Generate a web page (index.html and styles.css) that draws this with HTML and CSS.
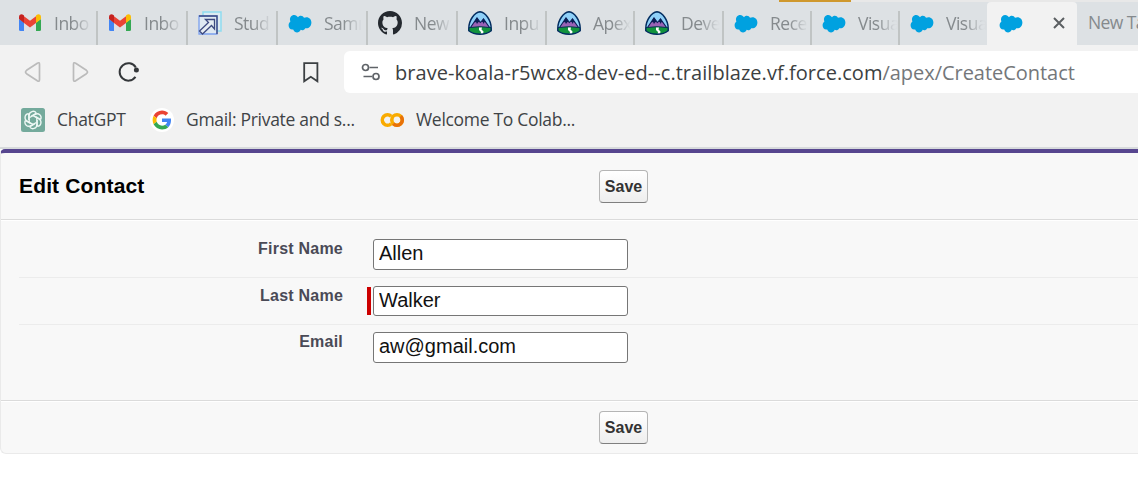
FILE: index.html
```
<!DOCTYPE html>
<html lang="en">
<head>
<meta charset="utf-8">
<title>Edit Contact</title>
<link rel="stylesheet" href="styles.css">
</head>
<body>
<svg class="defs" aria-hidden="true">
  <defs>
    <symbol id="gmail" viewBox="0 0 24 24">
      <path fill="#4285f4" d="M1 8v10.500Q1 20 2.500 20H6v-8.600z"/>
      <path fill="#34a853" d="M18 11.400V20h3.500q1.500 0 1.500-1.500V8z"/>
      <path fill="#ea4335" d="M6 5.200l6 4.600 6-4.600v6.700l-6 4.500-6-4.500z"/>
      <path fill="#c5221f" d="M1 8V6c0-2.600 2.500-3.500 4.400-2.100l.6.500v7.500z"/>
      <path fill="#fbbc04" d="M18 11.900V4.400l.6-.5C20.500 2.500 23 3.400 23 6v2z"/>
    </symbol>
    <symbol id="studio" viewBox="0 0 24 24">
      <path fill="#dcebf2" stroke="#8fdcf0" stroke-width="1.500" d="M5 1h18v19H5z"/>
      <path fill="#dfe9f2" stroke="#7ba0ee" stroke-width="1.300" d="M1 5h18v18H1z"/>
      <path fill="none" stroke="#3d4a80" stroke-width="1.400" d="M1 5h18v18"/>
      <path fill="#e6edf3" stroke="#3d4a80" stroke-width="1.300" d="M7.500 8.500h9v9.500l-3-3.500L4.500 23 1.500 20l9-8.500z"/>
    </symbol>
    <symbol id="cloud" viewBox="0 0 24 24">
      <path fill="#00a1e0" transform="translate(0 .6) scale(1 1.090)" d="M10 5.200C12 3 15 3.600 16 5.700c3.900-1.700 7.400.8 7.400 4.300 0 3.800-3.300 6-6.200 5.200-1 1.900-3 2.200-4.500 1.500-1.600 3.400-6.200 3.100-7.500-.3C2.300 17 .500 14.700.600 12.500c0-1.700.9-2.700 1.800-3.400C.900 5.400 3.600 3.100 6.200 3.100c1.700 0 3 .9 3.800 2.100z"/>
    </symbol>
    <symbol id="github" viewBox="0 0 16 16">
      <path fill="#24292f" d="M8 0C3.580 0 0 3.580 0 8c0 3.540 2.290 6.530 5.470 7.590.4.070.55-.17.55-.38 0-.19-.01-.82-.01-1.490-2.010.37-2.530-.49-2.690-.94-.09-.23-.48-.94-.82-1.130-.28-.15-.68-.52-.01-.53.63-.01 1.080.58 1.230.82.72 1.210 1.870.87 2.330.66.07-.52.28-.87.51-1.070-1.780-.2-3.640-.89-3.640-3.950 0-.87.31-1.590.82-2.150-.08-.2-.36-1.020.08-2.120 0 0 .67-.21 2.200.82.64-.18 1.320-.27 2-.27s1.360.09 2 .27c1.530-1.040 2.200-.82 2.200-.82.44 1.100.16 1.920.08 2.120.51.56.82 1.270.82 2.150 0 3.070-1.870 3.750-3.650 3.950.29.25.54.73.54 1.480 0 1.070-.01 1.930-.01 2.200 0 .21.15.46.55.38A8.010 8.010 0 0 0 16 8c0-4.420-3.580-8-8-8z"/>
    </symbol>
    <symbol id="trail" viewBox="0 0 24 24">
      <clipPath id="badge"><path d="M12 .8C17.500 1.600 23.200 9 23.200 17.500v2.200C20.500 22 17 23.200 12 23.200S3.500 22 .8 19.700v-2.200C.8 9 6.500 1.600 12 .8z"/></clipPath>
      <g clip-path="url(#badge)">
        <path fill="#8fd0f8" d="M0 0h24v24H0z"/>
        <path fill="#9a62b5" stroke="#0b1f56" stroke-width="1.100" d="M2.500 16.500L9 7l3.500 4.500L15.500 8l6 8.500z"/>
        <path fill="#0b1f56" d="M6 11.500l3-5 3 5-1.600-.5-1.400 2-1-2zM13.500 11l2-3.500 2.700 4-1.700-.5-.8 2-1-2z"/>
        <path fill="#12933d" stroke="#0b3657" d="M0 16.700q12-2 24 0v8H0z"/>
        <path fill="#fff" d="M11 16.500h3l-.5 2 2 2-.5 3h-2.500l.5-2.500-2-2z"/>
      </g>
      <path fill="none" stroke="#032d60" stroke-width="1.500" d="M12 .8C17.500 1.600 23.200 9 23.200 17.500v2.200C20.500 22 17 23.200 12 23.200S3.500 22 .8 19.700v-2.200C.8 9 6.500 1.600 12 .8z"/>
    </symbol>
  </defs>
</svg>

<header class="browser">
  <div class="tabs">
    <div class="tab"><svg class="ico"><use href="#gmail"/></svg><span class="name">Inbo</span></div>
    <div class="tab"><svg class="ico"><use href="#gmail"/></svg><span class="name">Inbo</span></div>
    <div class="tab"><svg class="ico"><use href="#studio"/></svg><span class="name">Stud</span></div>
    <div class="tab"><svg class="ico"><use href="#cloud"/></svg><span class="name">Samı</span></div>
    <div class="tab"><svg class="ico"><use href="#github"/></svg><span class="name">New</span></div>
    <div class="tab mid"><svg class="ico"><use href="#trail"/></svg><span class="name">Inpu</span></div>
    <div class="tab narrow"><svg class="ico"><use href="#trail"/></svg><span class="name">Apex</span></div>
    <div class="tab mid"><svg class="ico"><use href="#trail"/></svg><span class="name">Deve</span></div>
    <div class="tab narrow"><svg class="ico"><use href="#cloud"/></svg><span class="name">Rece</span></div>
    <div class="tab narrow marked"><svg class="ico"><use href="#cloud"/></svg><span class="name">Visua</span></div>
    <div class="tab narrow last"><svg class="ico"><use href="#cloud"/></svg><span class="name">Visua</span></div>
    <div class="tab active"><svg class="ico"><use href="#cloud"/></svg>
      <svg class="close" viewBox="0 0 12 12"><path d="M1 1l10 10M11 1L1 11"/></svg></div>
    <div class="tab fresh">New Ta</div>
  </div>

  <div class="toolbar">
    <svg class="nav" viewBox="0 0 20 22"><path d="M2.600 9.300L13.300 2.200q2.200-1.200 2.200 1v15.600q0 2.200-2.200 1L2.600 12.700q-2.200-1.700 0-3.400z"/></svg>
    <svg class="nav forward" viewBox="0 0 20 22"><path d="M15.400 9.300L4.700 2.200q-2.200-1.200-2.200 1v15.600q0 2.200 2.200 1l10.700-7.100q2.200-1.700 0-3.400z"/></svg>
    <svg class="reload" viewBox="0 0 22 20"><path d="M17.500 14.900A8.700 8.700 0 1 1 17.800 5.400"/><circle cx="18.400" cy="8" r="2.500"/></svg>
    <svg class="mark" viewBox="0 0 16 21"><path d="M1.200 1.200h13.200v18L7.800 14.800l-6.600 4.400z"/></svg>
    <div class="address">
      <svg class="tune" viewBox="0 0 20 18"><circle cx="4.500" cy="4.500" r="3"/><path d="M8.500 4.500H17M2.500 13.500H11"/><circle cx="15" cy="13.500" r="3"/></svg>
      <span class="url">brave-koala-r5wcx8-dev-ed--c.trailblaze.vf.force.com<span class="path">/apex/CreateContact</span></span>
    </div>
  </div>

  <nav class="bookmarks">
    <span class="bookmark gpt"><svg class="ico" viewBox="0 0 24 24"><rect width="24" height="24" rx="2.500" fill="#74aa9c"/>
      <g fill="none" stroke="#eef8f5" stroke-width="1.300">
        <path id="petal" d="M8.200 14.200V7.300a3.900 3.900 0 0 1 7.100-2.300M10 8.300l5.500-3.200"/>
        <use href="#petal" transform="rotate(60 12 12)"/><use href="#petal" transform="rotate(120 12 12)"/><use href="#petal" transform="rotate(180 12 12)"/><use href="#petal" transform="rotate(240 12 12)"/><use href="#petal" transform="rotate(300 12 12)"/>
      </g></svg><span class="label">ChatGPT</span></span>
    <span class="bookmark google"><svg class="ico" viewBox="0 0 24 24"><circle cx="12" cy="12" r="12" fill="#fff"/>
      <g transform="translate(2.600 2.600) scale(.392)">
        <path fill="#ea4335" d="M24 9.500c3.540 0 6.710 1.220 9.210 3.600l6.850-6.850C35.900 2.380 30.470 0 24 0 14.620 0 6.510 5.380 2.560 13.220l7.980 6.190C12.430 13.720 17.740 9.500 24 9.500z"/>
        <path fill="#4285f4" d="M46.980 24.550c0-1.570-.15-3.090-.38-4.550H24v9.020h12.940c-.58 2.960-2.260 5.480-4.780 7.180l7.730 6c4.510-4.180 7.090-10.360 7.090-17.650z"/>
        <path fill="#fbbc05" d="M10.530 28.590c-.48-1.450-.76-2.990-.76-4.590s.27-3.140.76-4.590l-7.980-6.190C.92 16.460 0 20.120 0 24s.92 7.540 2.560 10.780l7.970-6.190z"/>
        <path fill="#34a853" d="M24 48c6.480 0 11.930-2.130 15.890-5.810l-7.730-6c-2.150 1.450-4.920 2.300-8.160 2.300-6.260 0-11.570-4.220-13.470-9.910l-7.980 6.190C6.510 42.620 14.620 48 24 48z"/>
      </g></svg><span class="label">Gmail: Private and s...</span></span>
    <span class="bookmark colab"><svg class="ico" viewBox="0 0 24 24">
      <g fill="none" stroke-width="3.600"><path stroke="#f9ab00" d="M11.200 8.300A5.200 5.200 0 1 0 11.200 15.700"/><circle cx="17" cy="12" r="5.200" stroke="#f9ab00"/><path stroke="#e8710a" d="M20.700 8.300A5.200 5.200 0 0 1 13.300 15.700"/></g>
      </svg><span class="label">Welcome To Colab...</span></span>
  </nav>
</header>

<main class="block">
  <div class="block-header"><h2>Edit Contact</h2><button class="save">Save</button></div>
  <form class="fields">
    <div class="row"><label for="first">First Name</label><span class="required"></span><input id="first" value="Allen"></div>
    <div class="row second"><label for="last">Last Name</label><span class="required on"></span><input id="last" value="Walker"></div>
    <div class="row third"><label for="email">Email</label><span class="required"></span><input id="email" value="aw@gmail.com"></div>
  </form>
  <div class="block-footer"><button class="save">Save</button></div>
</main>
</body>
</html>
```
FILE: styles.css
```
* { box-sizing: border-box; }
body { margin: 0; height: 490px; overflow: hidden; background: #fff; font-family: "Liberation Sans", Arial, sans-serif; }
svg { display: block; flex: none; }
.defs { position: absolute; width: 0; height: 0; }

.browser { height: 149px; background: #f2f2f2; border-bottom: 2px solid #d7dadc; font-family: "Open Sans", "Noto Sans", sans-serif; overflow: hidden; }
.tabs { display: flex; height: 45px; padding-left: 7px; background: linear-gradient(90deg, transparent 851px, #e8e8e8 851px) 0 0 / 100% 2px no-repeat, #dde1e4; }
.tab { position: relative; display: flex; flex: none; align-items: center; width: 90px; padding-left: 11px; gap: 12px; color: #858a8d; font-size: 17.5px; }
.tab::after { content: ""; position: absolute; right: -1px; top: 11px; bottom: 0; width: 2px; background: #c0c4c4; }
.mid { width: 89px; }
.narrow { width: 88px; }
.last::after, .active::after, .fresh::after { display: none; }
.marked::before { content: ""; position: absolute; left: -32px; top: 0; width: 72px; height: 2px; background: #cf982d; }
.ico { width: 24px; height: 24px; }
.name { flex: none; white-space: nowrap; letter-spacing: -.5px; -webkit-mask-image: linear-gradient(90deg, #000 19px, rgba(0, 0, 0, .03) 37px); mask-image: linear-gradient(90deg, #000 19px, rgba(0, 0, 0, .03) 37px); }
.active { height: 43px; margin-top: 2px; padding: 0 12px 2px; background: #f2f2f2; border-radius: 4px 4px 0 0; justify-content: space-between; }
.close { width: 12px; height: 12px; fill: none; stroke: #5b5f62; stroke-width: 2; }
.fresh { width: 61px; padding-bottom: 1px; white-space: nowrap; letter-spacing: -.6px; }

.toolbar { display: flex; align-items: center; height: 53px; padding: 6px 0 5px 24px; }
.nav { width: 20px; height: 22px; fill: none; stroke: #bbb; stroke-width: 1.700; }
.forward { margin-left: 27px; }
.reload { width: 22px; height: 20px; margin-left: 27px; fill: none; stroke: #34373a; stroke-width: 2; }
.reload circle { fill: #34373a; stroke: none; }
.mark { width: 16px; height: 21px; margin-left: 163px; fill: none; stroke: #3c4043; stroke-width: 1.800; }
.address { display: flex; align-items: center; flex: 1; height: 42px; margin-left: 25px; padding-left: 17px; gap: 14px; background: #fff; border-radius: 6px 0 0 6px; }
.tune { width: 20px; height: 18px; fill: none; stroke: #5f6368; stroke-width: 1.700; }
.url { font-size: 20px; letter-spacing: .04px; white-space: nowrap; color: #3c3f42; }
.path { letter-spacing: -.04px; color: #74777a; }

.bookmarks { display: flex; height: 49px; padding: 0 0 5px 21px; }
.bookmark { display: flex; align-items: center; gap: 12px; font-size: 17.5px; letter-spacing: -.3px; color: #404346; white-space: nowrap; }
.label { padding-bottom: 3px; }
.gpt { width: 129px; }
.google { width: 230px; }

.block { height: 305px; background: #f8f8f8; border: 1px solid #eaeaea; border-width: 4px 0 1px 1px; border-top-color: #57468f; border-radius: 5px 0 0 6px; }
.block-header { display: flex; align-items: center; height: 67px; padding-left: 18px; border-bottom: 1px solid #dbdbdb; }
h2 { width: 580px; margin: 0; font-size: 21px; line-height: 24px; letter-spacing: .15px; color: #000; }
.save { width: 49px; height: 33px; padding: 1px 0 0; border: 1px solid #b5b5b5; border-bottom-color: #7f7f7f; border-radius: 4px; background: linear-gradient(#fff, #eee); font: bold 16px "Liberation Sans", Arial, sans-serif; color: #333; }
.fields { height: 180px; padding: 12px 0 0 18px; border-top: 1px solid #fff; }
.row { display: flex; align-items: flex-start; height: 45px; padding-top: 6px; border-bottom: 1px solid #ececec; }
.second { height: 47px; padding-top: 8px; }
.third { padding-top: 7px; border: 0; }
label { width: 324px; font-size: 16px; font-weight: bold; line-height: 19px; letter-spacing: .22px; text-align: right; color: #4a4a56; }
.required { width: 4px; height: 28px; margin: 1px 2px 0 24px; }
.on { background: #c00; }
input { width: 255px; height: 31px; padding: 0 5px 3px; border: 1px solid #767676; border-radius: 3px; background: #fff; font: 20px "Liberation Sans", Arial, sans-serif; color: #111; }
.second input { height: 30px; padding-bottom: 1px; }
.block-footer { height: 53px; padding: 10px 0 0 598px; border-top: 1px solid #dbdbdb; box-shadow: inset 0 1px #fff; }
```
